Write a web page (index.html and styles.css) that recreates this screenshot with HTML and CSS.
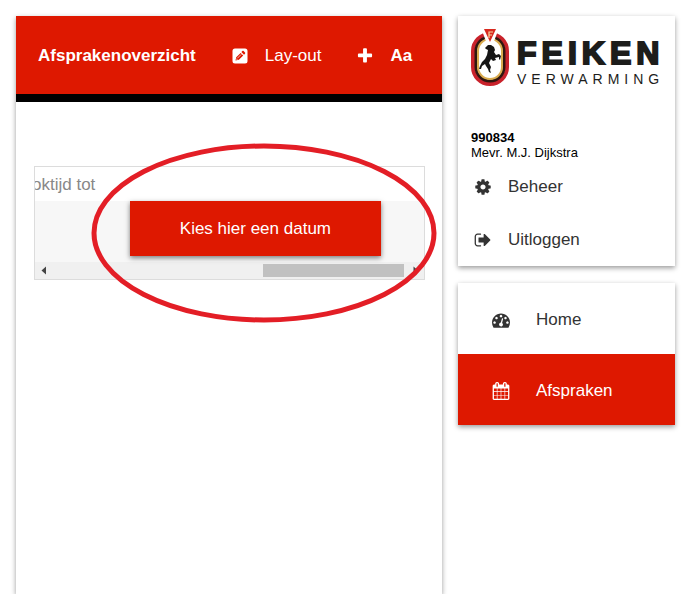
FILE: index.html
```html
<!DOCTYPE html>
<html lang="nl">
<head>
<meta charset="utf-8">
<meta name="viewport" content="width=device-width, initial-scale=1">
<title>Afsprakenoverzicht</title>
<link rel="stylesheet" href="styles.css">
</head>
<body>
<div class="page">
  <main class="card main">
    <header class="toolbar">
      <h1 class="title">Afsprakenoverzicht</h1>
      <button type="button" class="tool tool-layout">
        <svg class="icon" viewBox="0 0 18 18" aria-hidden="true"><path fill="currentColor" fill-rule="evenodd" d="M4 1.500h10a2.500 2.500 0 0 1 2.500 2.500v10a2.500 2.500 0 0 1-2.500 2.500H4A2.500 2.500 0 0 1 1.500 14V4A2.500 2.500 0 0 1 4 1.500zM4.500 13.500l3.400-.7 4.300-4.300-2.600-2.600-4.400 4.300zM10.400 5.100L13 7.700l1-1c.4-.4.4-.8 0-1.200L12.600 4.100c-.4-.4-.8-.4-1.200 0z"/><path stroke="currentColor" stroke-width=".7" d="M6.300 11.300L10.300 7.300M5 11.500l1.500 1.500"/></svg>
        <span>Lay-out</span>
      </button>
      <button type="button" class="tool tool-add">
        <svg class="icon" viewBox="0 0 1792 1792" aria-hidden="true"><path fill="currentColor" d="M1600 736v192q0 40-28 68t-68 28h-416v416q0 40-28 68t-68 28h-192q-40 0-68-28t-28-68v-416h-416q-40 0-68-28t-28-68v-192q0-40 28-68t68-28h416v-416q0-40 28-68t68-28h192q40 0 68 28t28 68v416h416q40 0 68 28t28 68z"/></svg>
        <span>Aa</span>
      </button>
    </header>
    <section class="planner">
      <div class="planner-head"><span>oktijd tot</span></div>
      <div class="planner-row">
        <button type="button" class="pick-date">Kies hier een datum</button>
      </div>
      <div class="scrollbar" aria-hidden="true">
        <svg class="arrow" viewBox="0 0 17 17"><path fill="#444" d="M11 4.500v8L6.500 8.500z"/></svg>
        <div class="track"><div class="thumb"></div></div>
        <svg class="arrow" viewBox="0 0 17 17"><path fill="#444" d="M6.500 4.500v8L11 8.500z"/></svg>
      </div>
      <svg class="marker" viewBox="0 0 346 180" aria-hidden="true"><ellipse cx="173" cy="90" rx="170" ry="87" fill="none" stroke="#e31e26" stroke-width="5"/></svg>
    </section>
  </main>

  <aside class="sidebar">
    <section class="card profile">
      <div class="logo">
        <svg class="emblem" viewBox="0 0 38 58" aria-hidden="true">
          <rect x="2" y="6" width="34" height="50" rx="17" fill="#fff" stroke="#c9222b" stroke-width="4"/>
          <rect x="5" y="9" width="28" height="44" rx="14" fill="none" stroke="#30160f" stroke-width="3"/>
          <rect x="7" y="11" width="24" height="40" rx="12" fill="none" stroke="#d9ab4e" stroke-width="2"/>
          <path fill="#fff" d="M10 0h18l-6 16h-6z"/>
          <path fill="#d8291f" d="M13 1h12l-6 13z"/>
          <path fill="none" stroke="#f6d6a0" stroke-width="1.200" d="M18 10V4h4M18 7h3"/>
          <path fill="#161616" d="M17 17l3 0 3 2 1 3-1 2 2 3 3-1 2 2-1 4-1-1v-2l-4 1 1 2-3 1-2-2-2 4 2 4-1 3 1 3-2-1-1-3-2-3-1-2-3 2-1 3-2 0 1-3 2-4 3-3 2-4 1-5-2-1-1-1 2-2z"/>
        </svg>
        <div class="wordmark">
          <span class="brand">FEIKEN</span>
          <span class="trade">VERWARMING</span>
        </div>
      </div>
      <p class="user"><strong>990834</strong><br>Mevr. M.J. Dijkstra</p>
      <a class="account-link" href="#beheer">
        <svg class="icon" viewBox="0 0 1792 1792" aria-hidden="true"><path fill="currentColor" d="M1152 896q0-106-75-181t-181-75-181 75-75 181 75 181 181 75 181-75 75-181zm512-109v222q0 12-8 23t-20 13l-185 28q-19 54-39 91 35 50 107 138 10 12 10 25t-9 23q-27 37-99 108t-94 71q-12 0-26-9l-138-108q-44 23-91 38-16 136-29 186-7 28-36 28h-222q-14 0-24.500-8.500t-11.500-21.500l-28-184q-49-16-90-37l-141 107q-10 9-25 9-14 0-25-11-126-114-165-168-7-10-7-23 0-12 8-23 15-21 51-66.500t54-70.500q-27-50-41-99l-183-27q-13-2-21-12.500t-8-23.500v-222q0-12 8-23t19-13l186-28q14-46 39-92-40-57-107-138-10-12-10-24 0-10 9-23 26-36 98.500-107.500t94.500-71.500q13 0 26 10l138 107q44-23 91-38 16-136 29-186 7-28 36-28h222q14 0 24.500 8.500t11.500 21.500l28 184q49 16 90 37l142-107q9-9 24-9 13 0 25 10 129 119 165 170 7 8 7 22 0 12-8 23-15 21-51 66.500t-54 70.500q26 50 41 98l183 28q13 2 21 12.500t8 23.500z"/></svg>
        <span>Beheer</span>
      </a>
      <a class="account-link" href="#uitloggen">
        <svg class="icon" viewBox="0 0 1792 1792" aria-hidden="true"><path fill="currentColor" d="M704 1440q0 4 1 20t.5 26.500-3 23.500-10 19.500-20.500 6.500h-320q-119 0-203.500-84.500t-84.500-203.500v-704q0-119 84.500-203.500t203.500-84.500h320q13 0 22.500 9.500t9.500 22.500q0 4 1 20t.5 26.500-3 23.500-10 19.500-20.500 6.500h-320q-66 0-113 47t-47 113v704q0 66 47 113t113 47h312l11.500 1 11.500 3 8 5.500 7 9 2 13.500zm928-544q0 26-19 45l-544 544q-19 19-45 19t-45-19-19-45v-288h-448q-26 0-45-19t-19-45v-384q0-26 19-45t45-19h448v-288q0-26 19-45t45-19 45 19l544 544q19 19 19 45z"/></svg>
        <span>Uitloggen</span>
      </a>
    </section>

    <nav class="card menu">
      <a class="menu-item" href="#home">
        <svg class="icon" viewBox="0 0 1792 1792" aria-hidden="true"><path fill="currentColor" d="M384 1152q0-53-37.500-90.500t-90.500-37.500-90.500 37.500-37.500 90.500 37.500 90.500 90.500 37.500 90.500-37.500 37.500-90.500zm192-448q0-53-37.500-90.500t-90.500-37.500-90.500 37.500-37.500 90.500 37.500 90.500 90.500 37.500 90.500-37.500 37.500-90.500zm428 481l101-382q6-26-7.500-48.500t-38.500-29.500-48 6.500-30 39.500l-101 382q-60 5-107 43.500t-63 98.500q-20 77 20 146t117 89 146-20 89-117q16-60-6-117t-72-91zm660-33q0-53-37.500-90.500t-90.500-37.500-90.500 37.500-37.500 90.500 37.500 90.500 90.500 37.500 90.500-37.500 37.500-90.500zm-640-640q0-53-37.500-90.500t-90.500-37.500-90.500 37.500-37.500 90.500 37.500 90.500 90.500 37.500 90.500-37.500 37.500-90.500zm448 192q0-53-37.500-90.500t-90.500-37.500-90.500 37.500-37.500 90.500 37.500 90.500 90.500 37.500 90.500-37.500 37.500-90.500zm320 448q0 261-141 483-19 29-54 29h-1402q-35 0-54-29-141-221-141-483 0-182 71-348t191-286 286-191 348-71 348 71 286 191 191 286 71 348z"/></svg>
        <span>Home</span>
      </a>
      <a class="menu-item active" href="#afspraken" aria-current="page">
        <svg class="icon" viewBox="0 0 1792 1792" aria-hidden="true"><path fill="currentColor" d="M192 1664h288v-288h-288v288zm352 0h320v-288h-320v288zm-352-352h288v-320h-288v320zm352 0h320v-320h-320v320zm-352-384h288v-288h-288v288zm736 736h320v-288h-320v288zm-384-736h320v-288h-320v288zm768 736h288v-288h-288v288zm-384-352h320v-320h-320v320zm-352-864v-288q0-13-9.500-22.500t-22.500-9.500h-64q-13 0-22.500 9.500t-9.500 22.500v288q0 13 9.500 22.500t22.500 9.500h64q13 0 22.500-9.500t9.500-22.500zm736 864h288v-320h-288v320zm-384-384h320v-288h-320v288zm384 0h288v-288h-288v288zm32-480v-288q0-13-9.500-22.500t-22.500-9.500h-64q-13 0-22.500 9.500t-9.500 22.500v288q0 13 9.500 22.500t22.500 9.500h64q13 0 22.500-9.500t9.500-22.500zm384-64v1280q0 52-38 90t-90 38h-1408q-52 0-90-38t-38-90v-1280q0-52 38-90t90-38h128v-96q0-66 47-113t113-47h64q66 0 113 47t47 113v96h384v-96q0-66 47-113t113-47h64q66 0 113 47t47 113v96h128q52 0 90 38t38 90z"/></svg>
        <span>Afspraken</span>
      </a>
    </nav>
  </aside>
</div>
</body>
</html>
```

FILE: styles.css
```css
:root {
  --red: #de1800;
  --text: #333;
}

* {
  box-sizing: border-box;
}

body {
  margin: 0;
  background: #fff;
  color: var(--text);
  font: 17px/20px "Liberation Sans", Arial, sans-serif;
}

button {
  border: 0;
  background: none;
  color: inherit;
  font: inherit;
  padding: 0;
  cursor: pointer;
}

a {
  color: inherit;
  text-decoration: none;
}

.page {
  display: grid;
  grid-template-columns: minmax(0, 1fr) 217px;
  gap: 16px;
  min-height: 100vh;
  padding: 16px 10px 0 16px;
}

.card {
  background: #fff;
  box-shadow: 0 2px 5px rgba(0, 0, 0, 0.4);
}

.icon {
  flex: none;
  display: block;
  width: 18px;
  height: 18px;
}

/* Toolbar */
.toolbar {
  display: flex;
  align-items: center;
  height: 86px;
  padding: 2px 22px 0;
  background: var(--red);
  border-bottom: 8px solid #000;
  color: #fff;
}

.title {
  margin: 0;
  font-size: 17px;
}

.tool {
  display: flex;
  align-items: center;
  gap: 16px;
  margin-left: 35px;
}

.tool-add {
  font-weight: bold;
}

/* Planner */
.planner {
  position: relative;
  margin: 64px 17px 0 18px;
  border: 1px solid #dcdcdc;
}

.planner-head {
  height: 34px;
  padding-top: 8px;
  overflow: hidden;
  color: #888;
}

.planner-head span {
  margin-left: -3px;
}

.planner-row {
  display: flex;
  justify-content: flex-end;
  height: 61px;
  padding-right: 43px;
  background: #f7f7f7;
}

.pick-date {
  height: 55px;
  padding: 0 50px;
  background: var(--red);
  box-shadow: 0 2px 5px rgba(0, 0, 0, 0.5);
  color: #fff;
}

.scrollbar {
  display: flex;
  height: 17px;
  background: #f0f0f0;
}

.arrow {
  flex: none;
  width: 17px;
  height: 17px;
}

.track {
  flex: 1;
  display: flex;
  justify-content: flex-end;
  padding: 2px 3px 2px 0;
}

.thumb {
  width: 40%;
  background: #c1c1c1;
}

.marker {
  position: absolute;
  top: -24px;
  left: 56px;
  width: 346px;
  height: 180px;
  pointer-events: none;
}

/* Sidebar */
.sidebar {
  display: flex;
  flex-direction: column;
  gap: 17px;
}

.profile {
  padding: 12px 12px 16px 13px;
}

.logo {
  display: flex;
  gap: 8px;
  color: #1d1d1b;
}

.emblem {
  flex: none;
  width: 38px;
  height: 58px;
}

.wordmark {
  display: flex;
  flex-direction: column;
  padding-top: 7px;
}

.brand {
  font-size: 32px;
  font-weight: bold;
  line-height: 36px;
  letter-spacing: 5px;
  -webkit-text-stroke: 2px currentColor;
}

.trade {
  font-size: 14px;
  line-height: 16px;
  letter-spacing: 5px;
}

.user {
  margin: 43px 0 17px;
  color: #000;
  font-size: 13px;
  line-height: 15px;
}

.account-link {
  display: flex;
  align-items: center;
  gap: 16px;
  height: 20px;
  padding-left: 3px;
}

.account-link + .account-link {
  margin-top: 33px;
}

.menu-item {
  display: flex;
  align-items: center;
  gap: 26px;
  height: 71px;
  padding: 2px 0 0 34px;
}

.menu-item.active {
  background: var(--red);
  color: #fff;
}
```
